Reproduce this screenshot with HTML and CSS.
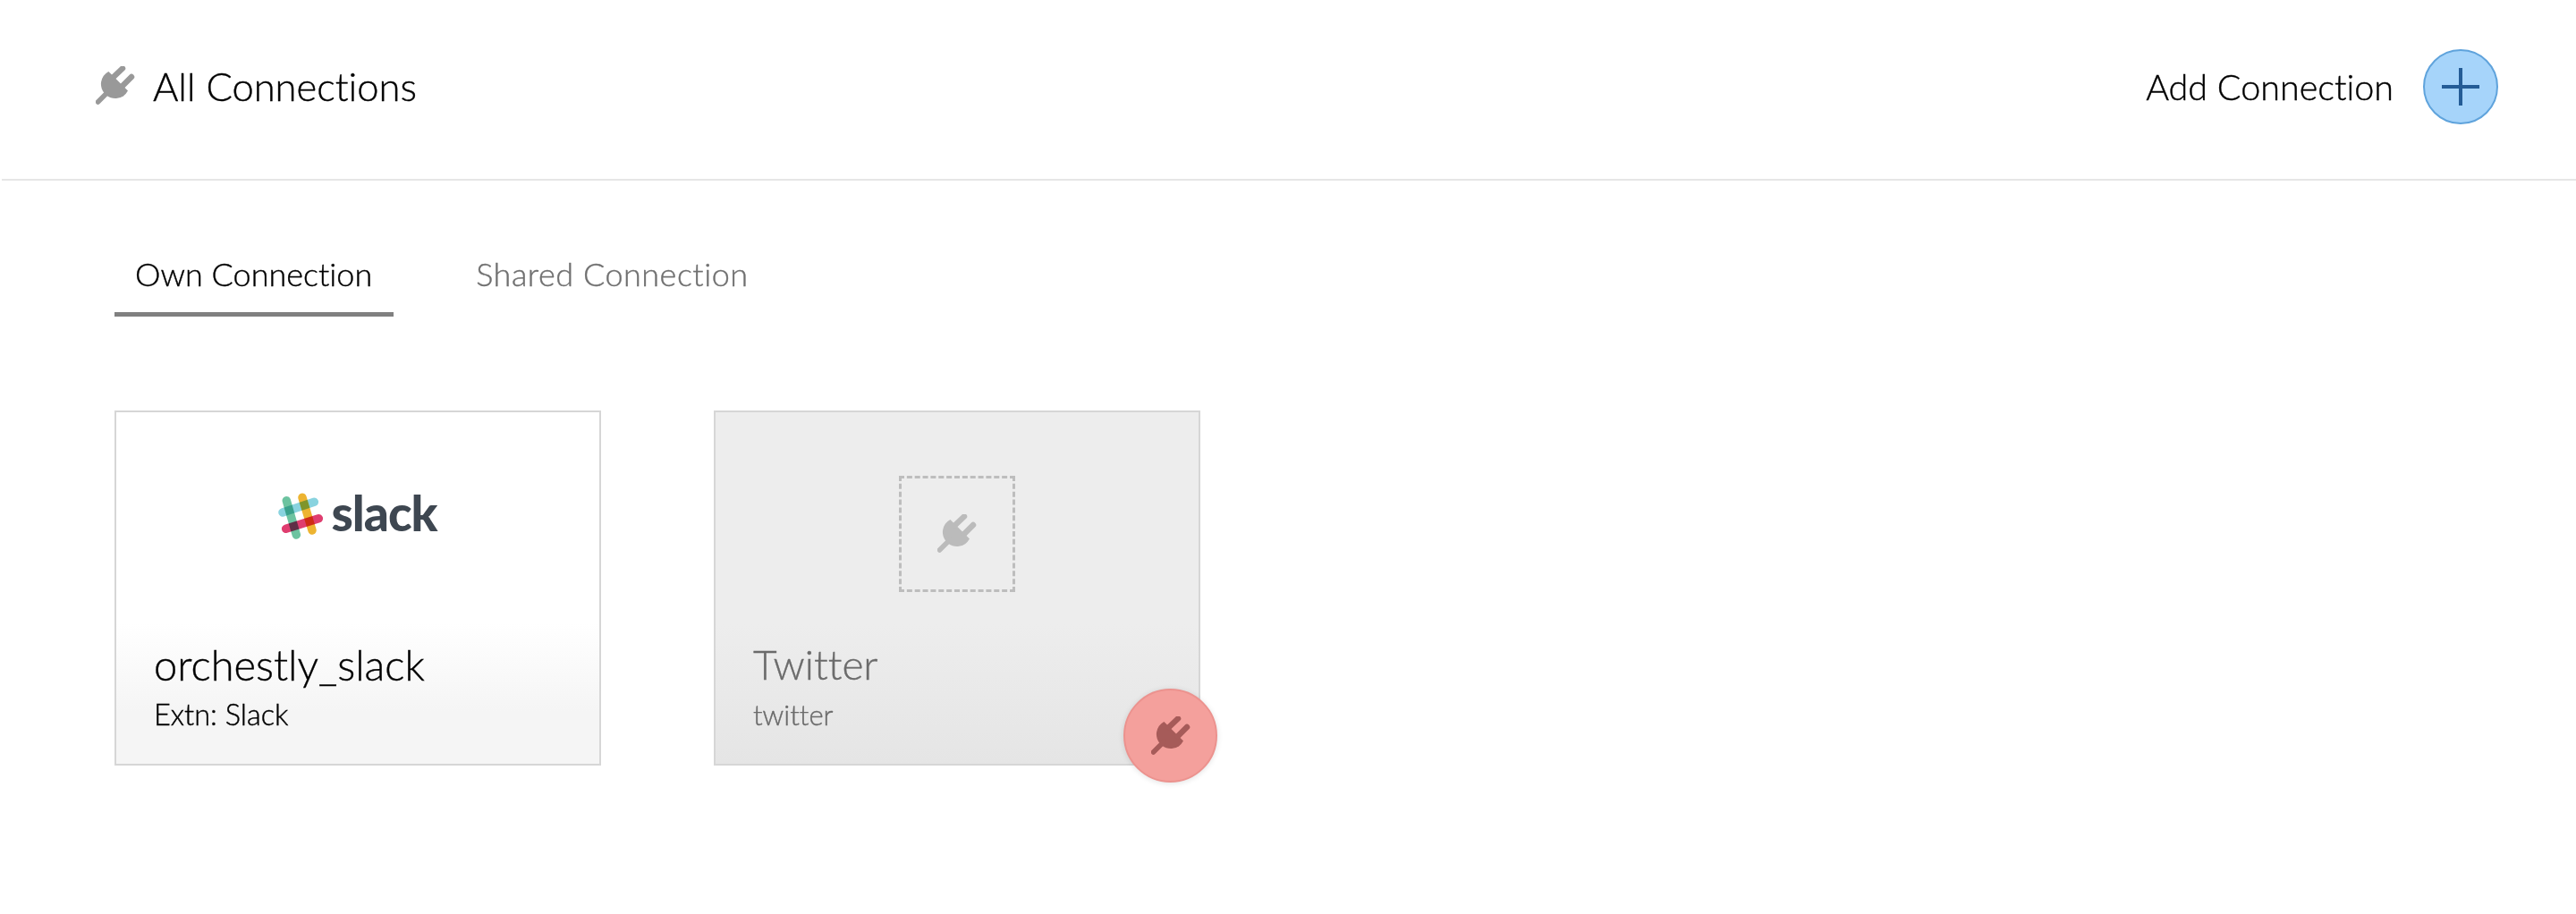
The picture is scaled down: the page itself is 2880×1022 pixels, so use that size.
FILE: index.html
```html
<!DOCTYPE html>
<html lang="en">
<head>
    <meta charset="UTF-8">
    <meta name="viewport" content="width=device-width, initial-scale=1.0">
    <title>All Connections</title>
    <link rel="stylesheet" href="styles.css">
</head>
<body>
    <!-- plug icon, reused below -->
    <svg class="sprite" width="0" height="0">
        <symbol id="plug" viewBox="0 0 44 44">
            <path d="M36 27.6A16 16 0 1 1 14.4 5.9Z" fill="currentColor"/>
            <path d="M20 12L30 2.5M30 22L40 12" stroke="currentColor" stroke-width="6.5" stroke-linecap="round" fill="none"/>
            <path d="M2.5 40L14 28.5" stroke="currentColor" stroke-width="5.5" stroke-linecap="round" fill="none"/>
        </symbol>
    </svg>

    <header class="top-bar">
        <div class="page-title">
            <svg class="plug plug-title"><use href="#plug"/></svg>
            <h1>All Connections</h1>
        </div>
        <div class="add-connection">
            <span>Add Connection</span>
            <button class="add-btn" aria-label="Add Connection">
                <svg width="42" height="42" viewBox="0 0 42 42"><path d="M21 0V42M0 21H42" stroke="#245c96" stroke-width="4"/></svg>
            </button>
        </div>
    </header>

    <nav class="tabs">
        <a class="tab active">Own Connection</a>
        <a class="tab">Shared Connection</a>
    </nav>

    <main class="cards">
        <div class="card">
            <div class="card-logo slack-logo">
                <svg class="slack-mark" width="50" height="50" viewBox="0 0 50 50">
                    <g stroke-width="9.5" stroke-linecap="round" fill="none">
                        <path class="hash" d="M9.3 7.7L20.3 46" stroke="#6cc3a0"/>
                        <path class="hash" d="M27 4.3L38 41" stroke="#edb431"/>
                        <path class="hash" d="M5 21L40.3 9.3" stroke="#89d3df"/>
                        <path class="hash" d="M8.7 39.3L45.3 27.7" stroke="#df3d6f"/>
                    </g>
                </svg>
                <span class="slack-word">slack</span>
            </div>
            <div class="card-name">orchestly_slack</div>
            <div class="card-sub">Extn: Slack</div>
        </div>

        <div class="card disabled">
            <div class="card-logo empty-logo">
                <div class="logo-box">
                    <svg class="plug plug-box"><use href="#plug"/></svg>
                </div>
            </div>
            <div class="card-name">Twitter</div>
            <div class="card-sub">twitter</div>
            <button class="connect-btn" aria-label="Connect">
                <svg class="plug plug-btn"><use href="#plug"/></svg>
            </button>
        </div>
    </main>
</body>
</html>
```
FILE: styles.css
```css
body {
    margin: 0;
    min-height: 100vh;
    background: #fff;
    color: #000;
    font-family: Lato, "Open Sans", sans-serif;
    font-weight: 300;
    font-variant-ligatures: none;
    -webkit-text-stroke: 0.4px currentColor;
}
.sprite {
    position: absolute;
}
.plug {
    width: 44px;
    height: 44px;
    display: block;
}
.top-bar {
    height: 200px;
    display: flex;
    align-items: center;
    justify-content: space-between;
    padding: 0 87px 0 105px;
    border-bottom: 2px solid #e6e6e6;
    margin-left: 2px;
}
.page-title {
    display: flex;
    align-items: center;
    gap: 20px;
    margin-top: -8px;
}
.page-title h1 {
    margin: 0;
    font-size: 43.5px;
    font-weight: 300;
}
.plug-title {
    color: #999;
}
.add-connection {
    display: flex;
    align-items: center;
    gap: 33px;
    font-size: 39.5px;
    margin-top: -7px;
}
.add-btn {
    width: 84px;
    height: 84px;
    border-radius: 50%;
    border: 2px solid #5fa3dc;
    background: #a6d4fa;
    padding: 0;
    display: flex;
    align-items: center;
    justify-content: center;
}
.tabs {
    display: flex;
    gap: 69px;
    padding-left: 128px;
    margin-top: 82px;
}
.tab {
    padding: 0 24px 21px 23px;
    font-size: 36px;
    letter-spacing: 0.5px;
    color: #707070;
    border-bottom: 5px solid transparent;
}
.tab.active {
    color: #000;
    letter-spacing: 0;
    border-bottom-color: #808080;
}
.cards {
    display: flex;
    gap: 126px;
    padding-left: 128px;
    margin-top: 105px;
}
.card {
    position: relative;
    width: 544px;
    height: 397px;
    box-sizing: border-box;
    padding: 0 42px;
    border: 2px solid #d6d6d6;
    background: linear-gradient(#fff 60%, #f5f5f5 85%);
}
.card.disabled {
    background: linear-gradient(#ededed 60%, #e5e5e5 100%);
    color: #6b6b6b;
}
.card-logo {
    height: 252px;
    box-sizing: border-box;
    display: flex;
    justify-content: center;
    align-items: flex-start;
}
.slack-logo {
    padding-top: 81px;
    gap: 9px;
}
.slack-mark {
    margin-top: 10px;
    overflow: visible;
}
.hash {
    mix-blend-mode: multiply;
}
.empty-logo {
    padding-top: 71px;
}
.slack-word {
    font-size: 55px;
    line-height: 62px;
    font-weight: 900;
    letter-spacing: -1px;
    color: #3e4751;
    -webkit-text-stroke: 0;
}
.logo-box {
    width: 130px;
    height: 130px;
    box-sizing: border-box;
    border: 3px dashed #bdbdbd;
    display: flex;
    align-items: center;
    justify-content: center;
}
.plug-box {
    color: #bbb;
}
.card-name {
    font-size: 47px;
    line-height: 60px;
}
.card-sub {
    font-size: 32.5px;
    line-height: 40px;
    margin-top: 6px;
}
.disabled .card-name {
    font-size: 46px;
}
.disabled .card-sub {
    font-size: 31px;
}
.connect-btn {
    position: absolute;
    right: -21px;
    bottom: -21px;
    width: 105px;
    height: 105px;
    border-radius: 50%;
    border: 2px solid #ec928e;
    background: #f4a09c;
    box-shadow: 0 1px 6px rgba(0, 0, 0, 0.12);
    padding: 0;
    display: flex;
    align-items: center;
    justify-content: center;
}
.plug-btn {
    color: #a65b59;
}
```
